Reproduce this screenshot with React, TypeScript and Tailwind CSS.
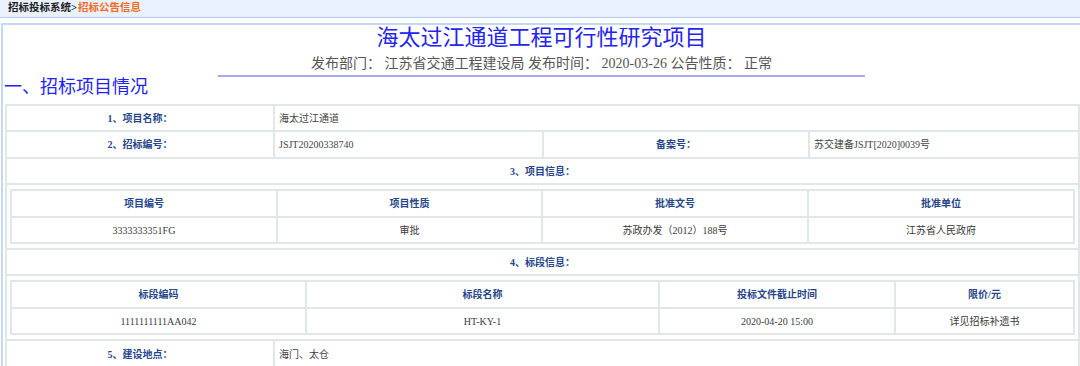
import React from 'react';

const font = { fontFamily: '"Liberation Serif", "Noto Sans CJK SC", serif' };

const cell = 'border-2 border-[#e1e7e7] text-[10px]';
const label = `${cell} text-center font-bold text-[#28478a]`;
const value = `${cell} text-left pl-[4px] text-[#444]`;

interface SubTableProps {
  widths: number[];
  heads: string[];
  values: string[];
}

const SubTable: React.FC<SubTableProps> = ({ widths, heads, values }) => (
  <table className="table-fixed border-collapse w-[1063px]">
    <colgroup>
      {widths.map((w, i) => (
        <col key={i} style={{ width: w }} />
      ))}
    </colgroup>
    <tbody>
      <tr className="h-[27px]">
        {heads.map((h) => (
          <td key={h} className={label}>{h}</td>
        ))}
      </tr>
      <tr className="h-[26px]">
        {values.map((v) => (
          <td key={v} className={`${cell} text-center text-[#3a3a3a]`}>{v}</td>
        ))}
      </tr>
    </tbody>
  </table>
);

export default function App() {
  return (
    <div className="w-[1080px] h-[366px] overflow-hidden bg-white" style={font}>
      {/* Breadcrumb */}
      <div className="h-[18px] bg-[#e9f1fd] border-b border-[#b5cbef] pl-[8px] text-[10.5px] leading-[16px] font-bold">
        <span className="text-[#222]">招标投标系统&gt;</span>
        <span className="text-[#f26b1d] ml-[1px]">招标公告信息</span>
      </div>

      <div className="mt-[5px] ml-[1px] border-t-2 border-l-2 border-[#c3d8f6]">
        {/* Title */}
        <div className="text-center text-[22px] leading-[26px] text-[#2424ee]">
          海太过江通道工程可行性研究项目
        </div>
        <div className="w-[647px] mx-auto mt-[3px] pb-[1px] border-b-2 border-[#a9a9f2] text-center text-[14px] leading-[20px] text-[#555]">
          发布部门：&nbsp;江苏省交通工程建设局 发布时间：&nbsp;2020-03-26 公告性质：&nbsp;正常
        </div>

        <div className="pl-[1px] text-[18px] leading-[20px] text-[#2222ee]">一、招标项目情况</div>

        {/* Main table */}
        <table className="table-fixed border-collapse w-[1073px] mt-[7px] ml-[2px]">
          <colgroup>
            <col className="w-[268px]" />
            <col className="w-[269px]" />
            <col className="w-[266px]" />
            <col className="w-[270px]" />
          </colgroup>
          <tbody>
            <tr className="h-[26px]">
              <td className={label}>1、项目名称：</td>
              <td className={value} colSpan={3}>海太过江通道</td>
            </tr>
            <tr className="h-[27px]">
              <td className={label}>2、招标编号：</td>
              <td className={`${value} text-[#333]`}>JSJT20200338740</td>
              <td className={label}>备案号：</td>
              <td className={value}>苏交建备JSJT[2020]0039号</td>
            </tr>
            <tr className="h-[26px]">
              <td className={label} colSpan={4}>3、项目信息：</td>
            </tr>
            <tr className="h-[64px]">
              <td className={`${cell} px-[3px] py-[4px]`} colSpan={4}>
                <SubTable
                  widths={[266, 265, 266, 266]}
                  heads={['项目编号', '项目性质', '批准文号', '批准单位']}
                  values={['3333333351FG', '审批', '苏政办发（2012）188号', '江苏省人民政府']}
                />
              </td>
            </tr>
            <tr className="h-[26px]">
              <td className={label} colSpan={4}>4、标段信息：</td>
            </tr>
            <tr className="h-[64px]">
              <td className={`${cell} px-[3px] py-[4px]`} colSpan={4}>
                <SubTable
                  widths={[295, 353, 236, 179]}
                  heads={['标段编码', '标段名称', '投标文件截止时间', '限价/元']}
                  values={['1111111111AA042', 'HT-KY-1', '2020-04-20 15:00', '详见招标补遗书']}
                />
              </td>
            </tr>
            <tr className="h-[28px]">
              <td className={label}>5、建设地点：</td>
              <td className={value} colSpan={3}>海门、太仓</td>
            </tr>
          </tbody>
        </table>
      </div>
    </div>
  );
}
